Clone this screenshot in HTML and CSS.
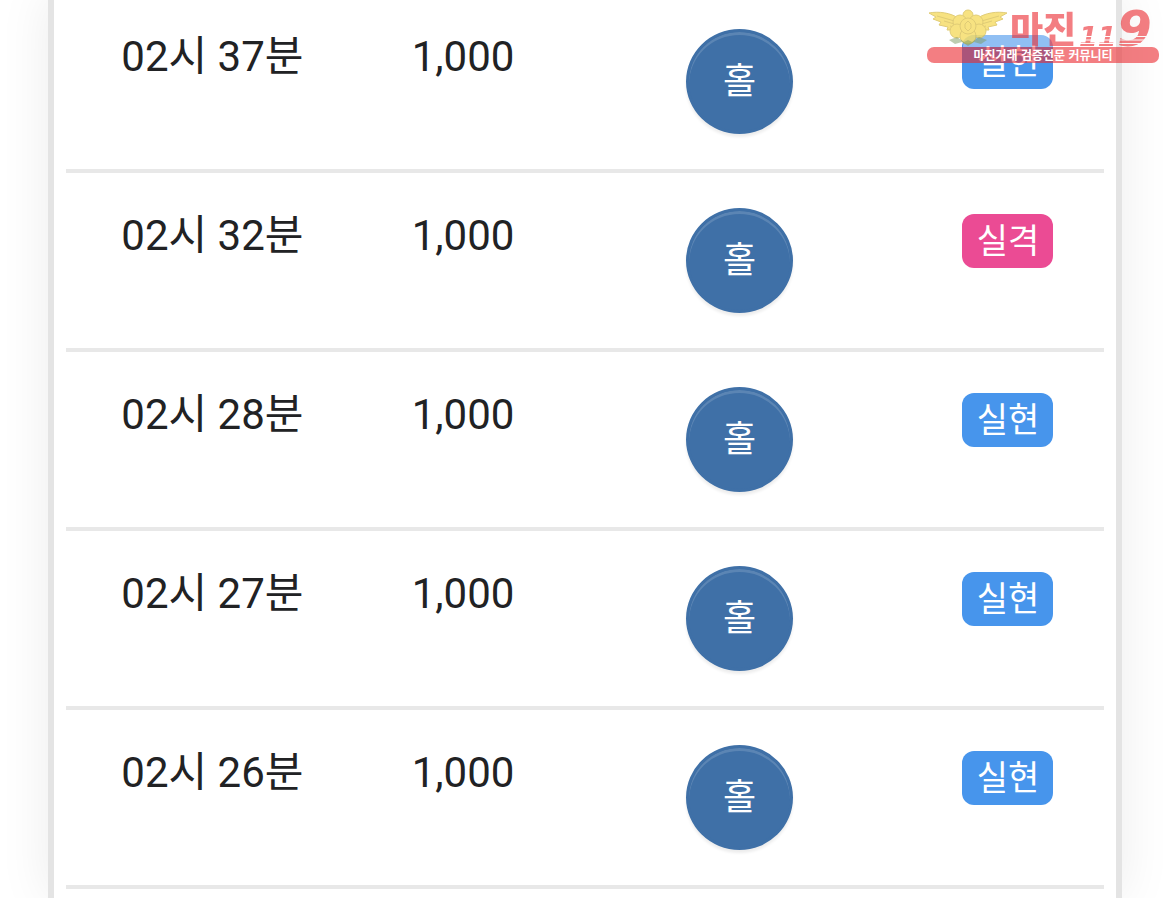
FILE: index.html
```html
<!DOCTYPE html>
<html lang="ko">
<head>
  <meta charset="UTF-8">
  <title>내역</title>
  <meta name="viewport" content="width=device-width, initial-scale=1.0">
  <link rel="stylesheet" href="styles.css">
</head>
<body>

  <div class="card">
    <table class="history">
      <tbody>
        <tr>
          <td class="time">02시 37분</td>
          <td class="amount">1,000</td>
          <td class="pick"><button type="button" class="btn-pick">홀</button></td>
          <td class="result"><span class="badge win">실현</span></td>
        </tr>
        <tr>
          <td class="time">02시 32분</td>
          <td class="amount">1,000</td>
          <td class="pick"><button type="button" class="btn-pick">홀</button></td>
          <td class="result"><span class="badge lose">실격</span></td>
        </tr>
        <tr>
          <td class="time">02시 28분</td>
          <td class="amount">1,000</td>
          <td class="pick"><button type="button" class="btn-pick">홀</button></td>
          <td class="result"><span class="badge win">실현</span></td>
        </tr>
        <tr>
          <td class="time">02시 27분</td>
          <td class="amount">1,000</td>
          <td class="pick"><button type="button" class="btn-pick">홀</button></td>
          <td class="result"><span class="badge win">실현</span></td>
        </tr>
        <tr>
          <td class="time">02시 26분</td>
          <td class="amount">1,000</td>
          <td class="pick"><button type="button" class="btn-pick">홀</button></td>
          <td class="result"><span class="badge win">실현</span></td>
        </tr>
      </tbody>
    </table>
  </div>

  <!-- Watermark -->
  <svg class="watermark" viewBox="0 0 232 56" width="232" height="56">
    <defs>
      <mask id="stripes" maskUnits="userSpaceOnUse" x="0" y="0" width="232" height="56">
        <rect width="232" height="56" fill="#fff"/>
        <path d="M140 28.500H232M140 32H232M140 35.500H232" stroke="#000"/>
      </mask>
    </defs>
    <path class="wm-back" d="M48 27H115Q127 27 127 39H36Q36 27 48 27Z"/>
    <g class="wm-emblem">
      <path d="M2 5 C12 3 24 5 31 10 L37 13 V25 L27 25 L28 22 L20 22 L21 19 L12 17 L14 14 L6 11 L9 9 Z"/>
      <path d="M80 5 C70 3 58 5 51 10 L45 13 V25 L55 25 L54 22 L62 22 L61 19 L70 17 L68 14 L76 11 L73 9 Z"/>
      <path d="M10 8 L31 14 M17 13 L31 17 M23 18 L31 20 M72 8 L51 14 M65 13 L51 17 M59 18 L51 20"/>
      <circle cx="41" cy="7" r="5"/>
      <circle cx="33" cy="14" r="7"/>
      <circle cx="49" cy="14" r="7"/>
      <circle cx="30" cy="23" r="7"/>
      <circle cx="52" cy="23" r="7"/>
      <circle cx="41" cy="28" r="8"/>
      <circle cx="41" cy="18" r="8"/>
      <path d="M41 13 L44 16 L44 20 L41 23 L38 20 L38 16 Z"/>
    </g>
    <path class="wm-leaf" d="M22 32 L30 29 L37 34 L41 32 L45 34 L52 29 L60 32 L54 36 L47 34 L41 38 L35 34 L28 36 Z"/>
    <g class="wm-red">
      <rect y="39" width="232" height="16" rx="7"/>
      <text class="wm-name" x="83" y="35">마진</text>
      <g mask="url(#stripes)">
        <text class="wm-number" x="152" y="38" font-size="27">11</text>
        <text class="wm-number" x="190" y="38" font-size="50">9</text>
      </g>
    </g>
    <text class="wm-slogan" x="116" y="52" text-anchor="middle">마진거래 검증전문 커뮤니티</text>
  </svg>

</body>
</html>
```

FILE: styles.css
```css
body {
  margin: 0;
  padding: 0 48px;
  background: #fff;
  color: #212224;
  font-family: Roboto, "Noto Sans CJK KR", sans-serif;
  font-size: 42px;
  line-height: 66px;
  overflow: hidden;
}

.card {
  box-sizing: border-box;
  min-height: calc(100vh + 6px);
  margin-top: -6px;
  padding: 0 12px;
  border: solid #e4e4e4;
  border-width: 0 6px;
  background: #fff;
  box-shadow: 0 0 48px rgba(0,0,0,0.08);
}

.history {
  width: 100%;
  table-layout: fixed;
  border-collapse: separate;
  border-spacing: 0;
}

.history td {
  padding: 30px 0 0;
  border-bottom: 4px solid #e8e8e8;
  text-align: center;
  vertical-align: top;
  white-space: nowrap;
}

.history .time {
  width: 28.2%;
}

.history .amount {
  width: 20.1%;
}

.history .pick {
  width: 33.2%;
  padding: 35px 0;
}

.history .result {
  width: 18.5%;
  padding-top: 41px;
}

.btn-pick {
  display: block;
  width: 107px;
  height: 105px;
  margin: 0 auto;
  padding: 0;
  border: 3px solid #3f70a7;
  border-radius: 50%;
  background: #3f70a7;
  box-shadow: inset 0 3px 0 rgba(255,255,255,0.15), 0 3px 3px rgba(0,0,0,0.075);
  color: #fff;
  font-family: inherit;
  font-size: 36px;
  line-height: 54px;
}

.badge {
  display: block;
  width: 91px;
  height: 54px;
  margin: 0 auto;
  border-radius: 12px;
  color: #fff;
  font-size: 34px;
  line-height: 54px;
}

.win {
  background: #4795ec;
}

.lose {
  background: #eb4b94;
}

.watermark {
  position: absolute;
  top: 8px;
  right: 11px;
}

.wm-back {
  fill: #fff;
  opacity: 0.4;
}

.wm-emblem {
  fill: #f6dc62;
  stroke: #d8bf55;
  stroke-width: 1;
  opacity: 0.8;
}

.wm-leaf {
  fill: #7d9b62;
  opacity: 0.5;
}

.wm-red {
  fill: #ec2a30;
  opacity: 0.6;
}

.wm-name {
  font-family: "Noto Sans CJK KR", sans-serif;
  font-size: 36px;
  font-weight: 900;
}

.wm-number {
  font-family: "DejaVu Sans", sans-serif;
  font-style: italic;
  font-weight: 700;
}

.wm-slogan {
  fill: #fff;
  font-family: "Noto Sans CJK KR", sans-serif;
  font-size: 12px;
  font-weight: 700;
}
```
